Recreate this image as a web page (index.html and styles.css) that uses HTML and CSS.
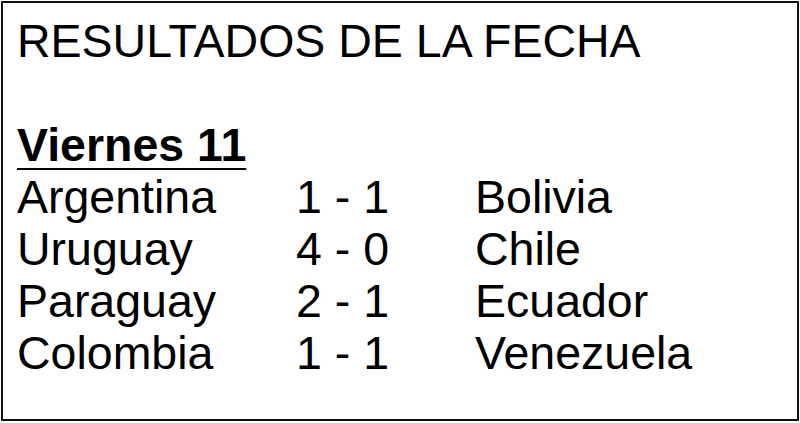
FILE: index.html
```html
<!DOCTYPE html>
<html lang="es">
<head>
<meta charset="utf-8">
<title>Resultados de la fecha</title>
<link rel="stylesheet" href="styles.css">
</head>
<body>
<div class="board">
  <h1 class="title">RESULTADOS DE LA FECHA</h1>
  <h2 class="day">Viernes 11</h2>
  <div class="results">
    <span>Argentina</span><span>1 - 1</span><span>Bolivia</span>
    <span>Uruguay</span><span>4 - 0</span><span>Chile</span>
    <span>Paraguay</span><span>2 - 1</span><span>Ecuador</span>
    <span>Colombia</span><span>1 - 1</span><span>Venezuela</span>
  </div>
</div>
</body>
</html>
```

FILE: styles.css
```css
html, body {
  margin: 0;
  padding: 0;
  background: #fff;
}
body {
  padding: 1px;
  font-family: "Liberation Sans", Arial, sans-serif;
  color: #000;
}
.board {
  box-sizing: border-box;
  width: 798px;
  height: 420px;
  border: 2px solid #111;
  padding: 12px 14px 0 14px;
  font-size: 46.5px;
  line-height: 52px;
}
.title {
  margin: 0 0 52px 0;
  font-size: inherit;
  font-weight: normal;
  line-height: inherit;
}
.day {
  margin: 0;
  font-size: inherit;
  font-weight: bold;
  line-height: inherit;
  text-decoration: underline;
  text-decoration-thickness: 2px;
  text-underline-offset: 7px;
}
.results {
  display: grid;
  grid-template-columns: 279px 179px auto;
}
```
